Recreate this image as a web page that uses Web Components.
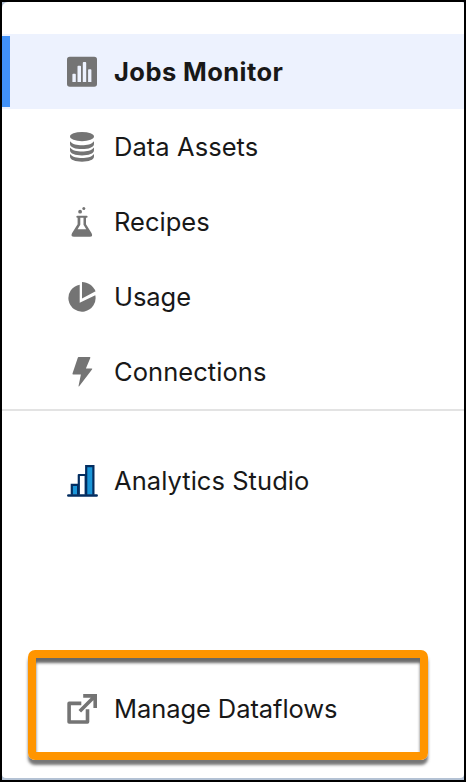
<!DOCTYPE html>
<html lang="en"><head><meta charset="utf-8"><title>Data Manager</title>
<style>html,body{margin:0;height:100%;background:#000;overflow:hidden}</style></head><body>
<side-panel>
<nav-item icon="jobs" active style="--track:.42px">Jobs Monitor</nav-item>
<nav-item icon="data" style="--track:.06px">Data Assets</nav-item>
<nav-item icon="recipes" style="--track:.02px">Recipes</nav-item>
<nav-item icon="usage" style="--track:-.05px">Usage</nav-item>
<nav-item icon="connections" style="--track:.06px">Connections</nav-item>
<nav-item slot="apps" icon="analytics" style="--track:.05px">Analytics Studio</nav-item>
<call-out slot="footer"><nav-item icon="external" style="--track:-.08px;--shift:0px">Manage Dataflows</nav-item></call-out>
</side-panel>
<script>
const icons={
jobs:'<rect x="3" y="3.8" width="30" height="30" rx="2.8"/><path fill="#edf2fe" d="M8.4 21.5q0-.8.8-.8h1.8q.8 0 .8.8v7.400H8.400zM13.500 13.500q0-.8.8-.8h1.900q.8 0 .8.8v15.400h-3.500zM18.800 9.900q0-.8.8-.8h1.800q.8 0 .8.8v19H18.800zM24.100 17.100q0-.8.8-.8h1.700q.8 0 .8.8v11.800h-3.300z"/>',
data:'<ellipse cx="18" cy="8.600" rx="12" ry="4.600"/><path d="M6 13.200c2.500 3.300 7 4 12 4s9.500-.7 12-4v2.700c0 3.300-5.300 5.200-12 5.200s-12-1.900-12-5.200zM6 19.600c2.500 3.200 7 4 12 4s9.500-.8 12-4v2.600c0 3.400-5.300 5.200-12 5.200s-12-1.800-12-5.200zM6 25.900c2.500 3.200 7 4 12 4s9.500-.8 12-4v2.600c0 3.400-5.300 5.200-12 5.200s-12-1.800-12-5.200z"/>',
recipes:'<circle cx="16.100" cy="8.700" r="1.900"/><circle cx="19.800" cy="5.400" r="1.500"/><path fill-rule="evenodd" d="M13.700 12.700h8.900q1 0 1 1t-1 1h-.6v6.600l5.600 8.900q1.600 3.500-1.600 3.500H10Q6.400 33.700 8 30.200l5.600-8.900v-6.600h-.3q-1 0-1-1t1.400-1zM16.300 14.700v7.100l-2.700 4.400h8.600l-2.700-4.400v-7.100z"/>',
usage:'<path d="M15.700 6.700V24.700L31.300 17.300A13.600 13.600 0 1 1 15.700 6.700z"/><path d="M18 4C23.700 4 29 7.500 31.600 13.300L18 20.600z"/>',
connections:'<path d="M14.600 4h11q1.100 0 .7 1l-4.400 10.400h5.600q1.400 0 .5 1.200L15.200 33.300q-.8.7-.6-.5L16.900 21.400H9.200q-1 0-.7-1L13.700 5q.3-1 .9-1z"/>',
analytics:'<path fill="#1b96d8" stroke="#032d60" stroke-width="2.200" d="M7.800 32.800V22.900h6.300v9.900M22.200 32.800V4.200h7.200v28.600"/><path fill="#fff" stroke="#032d60" stroke-width="2.200" stroke-linejoin="round" d="M14.800 32.800V13h6.900v19.800"/><path stroke="#032d60" stroke-width="2.700" stroke-linecap="round" d="M4.400 33.500h28.200"/>',
external:'<g fill="none" stroke="#747474" stroke-width="3.600"><path stroke-linejoin="round" d="M17.300 12.400H5.100V31h18.400V18.300"/><path d="M15.800 20.300 31 5.100M19.200 4.900h12v12"/></g>'};
customElements.define('nav-icon',class extends HTMLElement{connectedCallback(){this.attachShadow({mode:'open'}).innerHTML=`<style>:host{display:block;width:36px;height:36px;flex:none}svg{display:block}</style><svg width="36" height="36" viewBox="0 0 36 36" fill="#747474">${icons[this.getAttribute('name')]}</svg>`}});
customElements.define('nav-item',class extends HTMLElement{connectedCallback(){this.attachShadow({mode:'open'}).innerHTML=`<style>:host{display:flex;box-sizing:border-box;height:75px;padding:19px 0 0 62px;gap:14px;font:400 25.5px/36px Inter,"Liberation Sans",sans-serif;letter-spacing:var(--track);color:#181818;white-space:nowrap}span{padding-top:var(--shift,1px)}:host([active]){background:linear-gradient(#4191f8,#4191f8) 0 2px/8px 71px no-repeat #edf2fe;font-weight:700}</style><nav-icon name="${this.getAttribute('icon')}"></nav-icon><span><slot></slot></span>`}});
customElements.define('call-out',class extends HTMLElement{connectedCallback(){this.attachShadow({mode:'open'}).innerHTML=`<style>:host{display:block;box-sizing:border-box;width:400px;height:110px;margin-left:26px;border:8px solid #ff9500;border-radius:7px;padding-top:14px;box-shadow:0 5px 3px #555c,inset 0 5px 3px #444c}::slotted(nav-item){margin-left:-34px}</style><slot></slot>`}});
customElements.define('side-panel',class extends HTMLElement{connectedCallback(){this.attachShadow({mode:'open'}).innerHTML=`<style>:host{display:block;box-sizing:border-box;height:782px;border:2px solid #000;background:#b4c2d4}main{display:flex;flex-direction:column;box-sizing:border-box;width:462px;height:776px;padding-top:32px;background:#fff;border-radius:6px 2px 4px 4px}nav{border-bottom:2px solid #e3e3e3}section{padding-top:32px}footer{margin-top:132px}</style><main><nav><slot></slot></nav><section><slot name="apps"></slot></section><footer><slot name="footer"></slot></footer></main>`}});
</script></body></html>
